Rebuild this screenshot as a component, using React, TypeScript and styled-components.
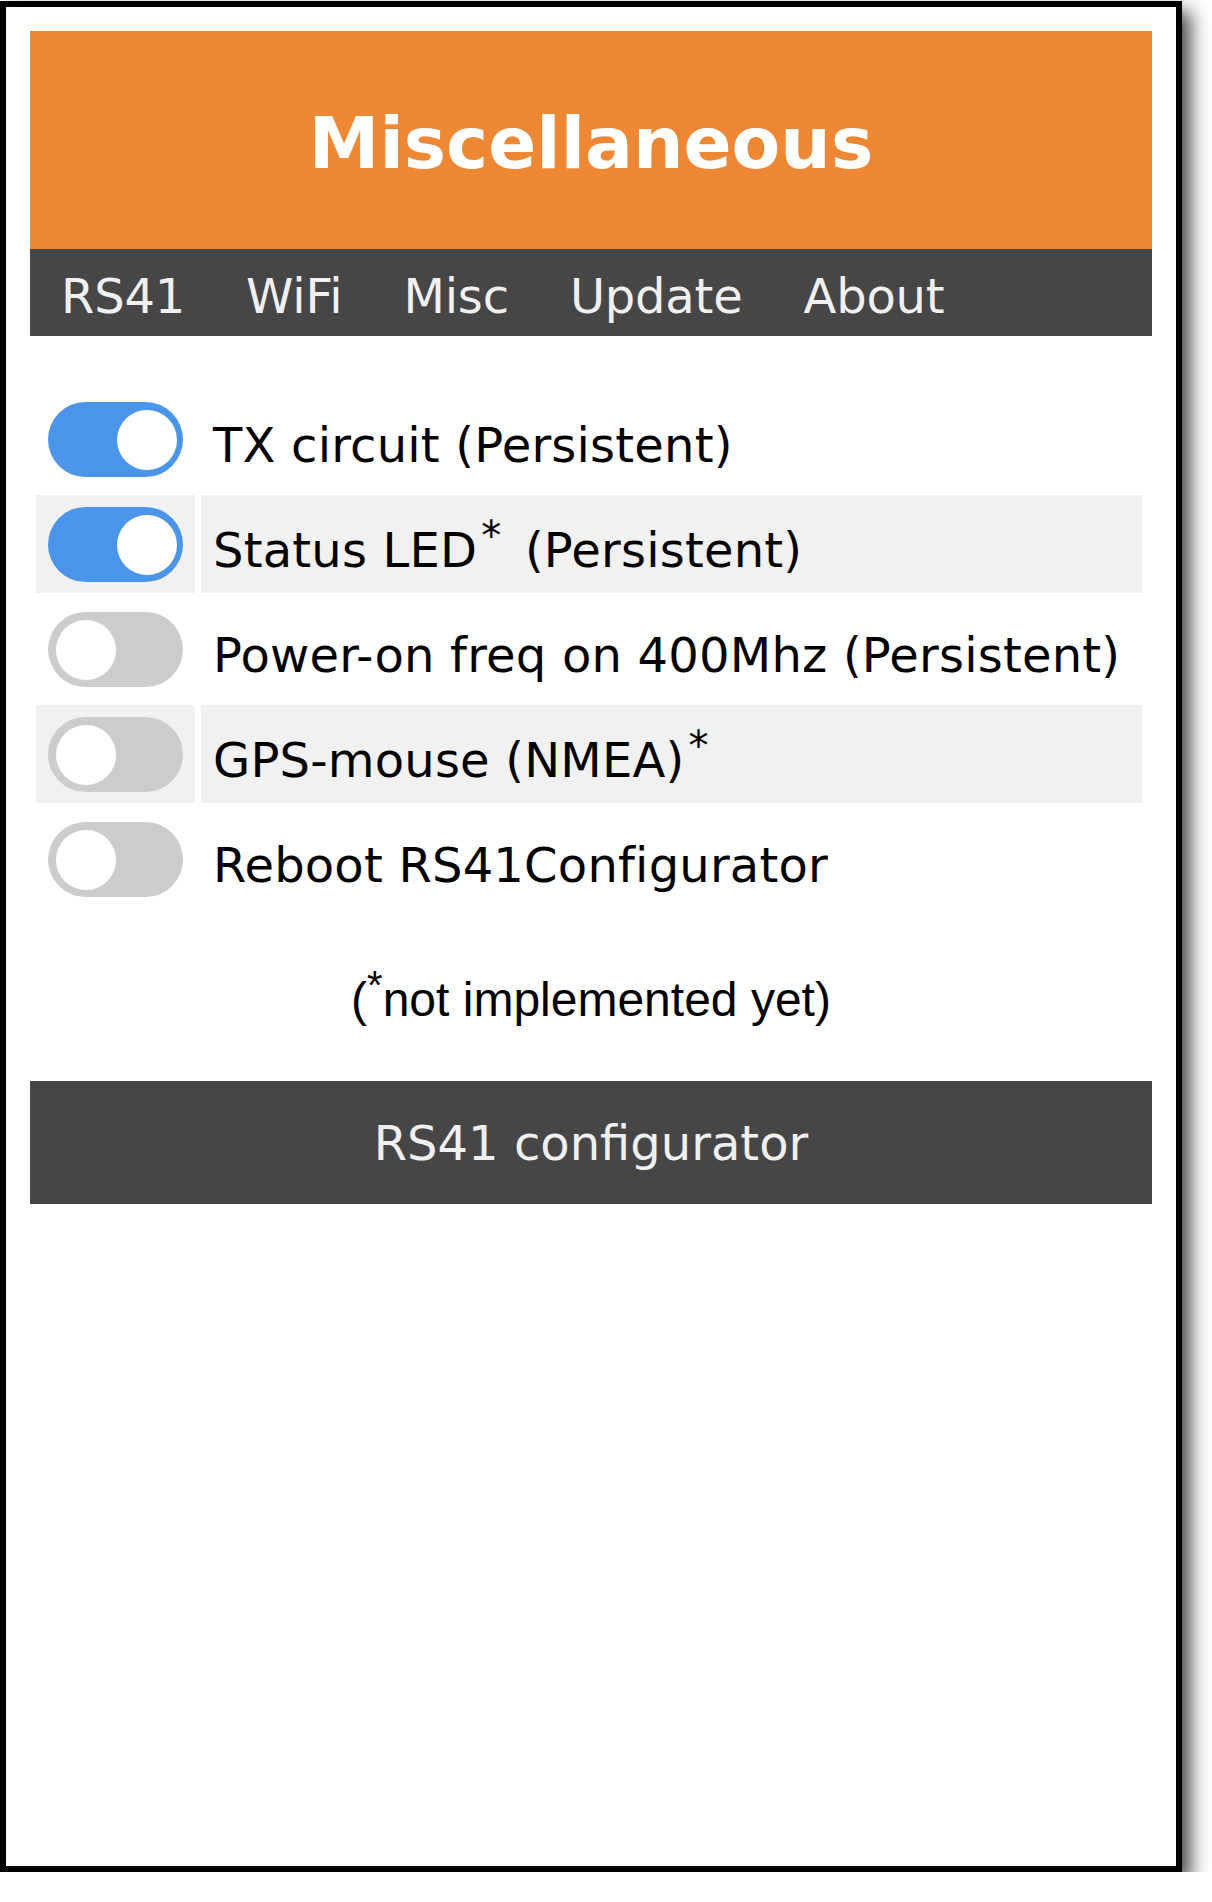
import React from "react";
import styled, { createGlobalStyle } from "styled-components";

const GlobalStyle = createGlobalStyle`
  html, body {
    margin: 0;
    padding: 0;
    background: #ffffff;
  }
  body {
    font-family: "DejaVu Sans", Verdana, sans-serif;
  }
`;

const Frame = styled.div`
  box-sizing: border-box;
  width: 1182px;
  height: 1871px;
  margin-top: 1px;
  border: 6px solid #000;
  background: #fff;
  box-shadow: 8px 10px 18px rgba(0, 0, 0, 0.75);
  padding: 24px;
  display: flex;
  flex-direction: column;
`;

const Header = styled.header`
  background: #ed8733;
  padding: 71px 0 63px;
  text-align: center;
`;

const Title = styled.h1`
  margin: 0;
  font-family: "DejaVu Sans", Verdana, sans-serif;
  font-weight: bold;
  font-size: 71px;
  line-height: 84px;
  color: #ffffff;
`;

const Nav = styled.nav`
  background: #464646;
  display: flex;
  padding: 19px 0 12px;
`;

const NavLink = styled.a`
  font-family: "DejaVu Sans", Verdana, sans-serif;
  font-size: 48px;
  line-height: 56px;
  letter-spacing: -0.2px;
  color: #f0f0f0;
  padding: 0 30px 0 31px;
  text-decoration: none;
  cursor: pointer;
`;

const Table = styled.table`
  margin-top: 47px;
  width: calc(100% - 4px);
  border-collapse: separate;
  border-spacing: 6px 7px;
`;

const Row = styled.tr<{ $shaded: boolean }>`
  & > td {
    background: ${(p) => (p.$shaded ? "#f1f1f1" : "transparent")};
  }
`;

const ToggleCell = styled.td`
  width: 135px;
  padding: 12px 12px 11px;
  vertical-align: middle;
`;

const LabelCell = styled.td`
  padding: 18px 12px 7px;
  vertical-align: middle;
  font-family: "DejaVu Sans", Verdana, sans-serif;
  font-size: 48px;
  line-height: 56px;
  letter-spacing: 0.2px;
  color: #000;
  white-space: nowrap;
`;

const Track = styled.div<{ $on: boolean }>`
  position: relative;
  width: 135px;
  height: 75px;
  border-radius: 38px;
  background: ${(p) => (p.$on ? "#4a95e9" : "#cccccc")};
  cursor: pointer;
`;

const Knob = styled.span<{ $on: boolean }>`
  position: absolute;
  top: 7.5px;
  left: ${(p) => (p.$on ? "69px" : "8px")};
  width: 60px;
  height: 60px;
  border-radius: 50%;
  background: #ffffff;
`;

const Star = styled.sup<{ $after?: boolean }>`
  font-size: 40px;
  line-height: 0;
  margin-left: 4px;
  margin-right: ${(p) => (p.$after ? "8px" : "0")};
`;

const Footnote = styled.p`
  margin: 48px 0 54px;
  text-align: center;
  font-family: "Liberation Sans", Arial, Helvetica, sans-serif;
  font-size: 48px;
  color: #000;
`;

const FootStar = styled.sup`
  font-size: 40px;
`;

const Footer = styled.footer`
  background: #464646;
  color: #f0f0f0;
  text-align: center;
  font-family: "DejaVu Sans", Verdana, sans-serif;
  font-size: 48px;
  line-height: 56px;
  padding: 34px 0 33px;
`;

type Item = { label: React.ReactNode; on: boolean };

const items: Item[] = [
  { label: "TX circuit (Persistent)", on: true },
  {
    label: (
      <>
        Status LED<Star $after>*</Star> (Persistent)
      </>
    ),
    on: true,
  },
  { label: "Power-on freq on 400Mhz (Persistent)", on: false },
  {
    label: (
      <>
        GPS-mouse (NMEA)<Star>*</Star>
      </>
    ),
    on: false,
  },
  { label: "Reboot RS41Configurator", on: false },
];

const Toggle: React.FC<{ on: boolean }> = ({ on }) => (
  <Track $on={on} role="switch" aria-checked={on}>
    <Knob $on={on} />
  </Track>
);

export default function App() {
  return (
    <>
      <GlobalStyle />
      <Frame>
        <Header>
          <Title>Miscellaneous</Title>
        </Header>
        <Nav>
          {["RS41", "WiFi", "Misc", "Update", "About"].map((n) => (
            <NavLink key={n}>{n}</NavLink>
          ))}
        </Nav>
        <Table>
          <tbody>
            {items.map((it, i) => (
              <Row key={i} $shaded={i % 2 === 1}>
                <ToggleCell>
                  <Toggle on={it.on} />
                </ToggleCell>
                <LabelCell>{it.label}</LabelCell>
              </Row>
            ))}
          </tbody>
        </Table>
        <Footnote>
          (<FootStar>*</FootStar>not implemented yet)
        </Footnote>
        <Footer>RS41 configurator</Footer>
      </Frame>
    </>
  );
}
